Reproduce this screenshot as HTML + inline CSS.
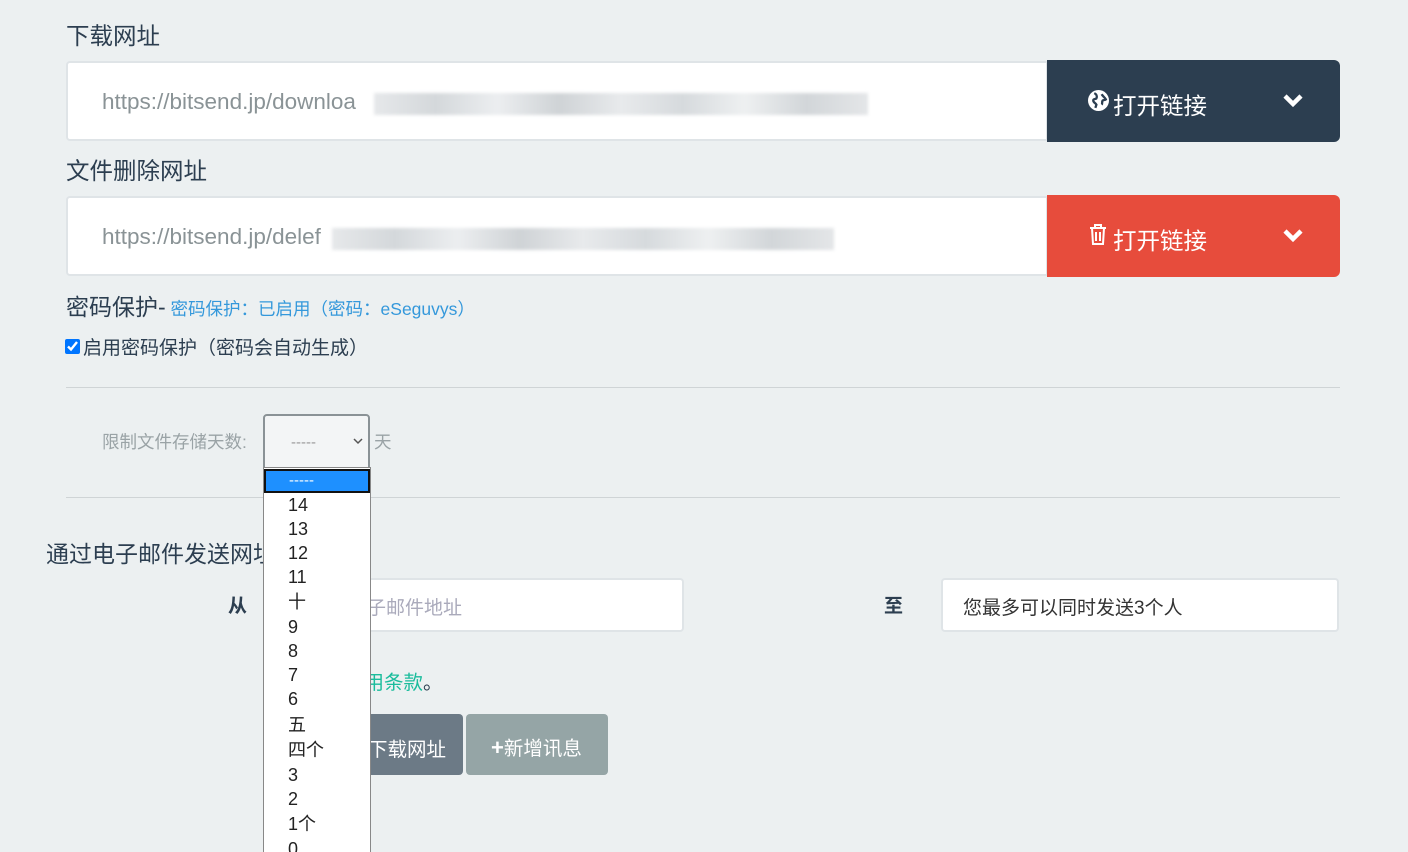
<!DOCTYPE html>
<html><head><meta charset="utf-8"><style>
html,body{margin:0;width:1408px;height:852px;overflow:hidden}
body{background:#ecf0f1;font-family:"Liberation Sans","Noto Sans CJK SC",sans-serif;color:#2c3e50;position:relative}
.a{position:absolute}
.lbl{font-size:23.5px}
.inp{background:#fff;border:2px solid #dfe4e7;box-sizing:border-box;border-radius:4px 0 0 4px}
.url{font-size:22.5px;color:#8a9396;left:34px;top:26px;white-space:nowrap}
.blur{position:absolute;height:22px;background:linear-gradient(90deg,#e6e8ea,#d4d8db,#eceef0,#cfd3d6,#e8eaec,#d6dadd,#eef0f1,#d2d6d9,#e4e6e8);filter:blur(1.5px)}
.btn{color:#fff;border-radius:0 6px 6px 0;box-sizing:border-box}
.btn span{position:absolute;left:66px;top:27px;font-size:23.5px}
.chev{position:absolute;right:36px;top:33px}
.opt{position:absolute;left:24px;font-size:18px;color:#222;height:24px;line-height:24px}
</style></head><body>
<div class="a lbl" style="left:66px;top:17px">下载网址</div>
<div class="a inp" style="left:66px;top:61px;width:982px;height:80px"><div class="a url">https://bitsend.jp/downloa</div><div class="blur" style="left:306px;top:30px;width:494px"></div></div>
<div class="a btn" style="left:1047px;top:60px;width:293px;height:82px;background:#2c3e50">
<svg class="a" style="left:41px;top:30px" width="21" height="21" viewBox="0 0 20 20"><circle cx="10" cy="10" r="10" fill="#fff"/><path d="M6 3c2 1 3 3 2 5-1 1-3 0-3 2s2 2 3 4l-1 3M13 4c1 2 3 3 4 5-1 1-2 0-3 1s0 3-1 4" stroke="#2c3e50" stroke-width="2.2" fill="none"/></svg>
<span>打开链接</span><svg class="chev" width="22" height="16" viewBox="0 0 22 16"><path d="M3 3l8 8 8-8" stroke="#fff" stroke-width="4.5" fill="none"/></svg></div>

<div class="a lbl" style="left:66px;top:152px">文件删除网址</div>
<div class="a inp" style="left:66px;top:196px;width:982px;height:80px"><div class="a url">https://bitsend.jp/delef</div><div class="blur" style="left:264px;top:30px;width:502px"></div></div>
<div class="a btn" style="left:1047px;top:195px;width:293px;height:82px;background:#e74c3c">
<svg class="a" style="left:42px;top:29px" width="18" height="22" viewBox="0 0 18 22"><path d="M1 4h16M6 4V1h6v3M3 4l1 16h10l1-16M7 8v9M11 8v9" stroke="#fff" stroke-width="2" fill="none"/></svg>
<span>打开链接</span><svg class="chev" width="22" height="16" viewBox="0 0 22 16"><path d="M3 3l8 8 8-8" stroke="#fff" stroke-width="4.5" fill="none"/></svg></div>

<div class="a" style="left:66px;top:288px;font-size:23px">密码保护-<span style="font-size:17.5px;color:#3498db"> 密码保护：已启用（密码：eSeguvys）</span></div>
<div class="a" style="left:65px;top:333px;font-size:19px"><input type="checkbox" checked style="margin:0 3px 0 0;width:15px;height:15px;vertical-align:0">启用密码保护（密码会自动生成）</div>
<div class="a" style="left:66px;top:387px;width:1274px;height:1px;background:#cfd4d6"></div>
<div class="a" style="left:102px;top:429px;font-size:17.5px;color:#9aa3a6">限制文件存储天数:</div>
<div class="a" style="left:263px;top:414px;width:107px;height:56px;box-sizing:border-box;border:2px solid #8a9296;border-radius:4px 4px 0 0;background:#f3f5f6"><span class="a" style="left:26px;top:18px;color:#999;font-size:15px">-----</span><svg class="a" style="left:88px;top:22px" width="10" height="8"><path d="M1 1l4 4 4-4" stroke="#555" stroke-width="1.5" fill="none"/></svg></div>
<div class="a" style="left:374px;top:429px;font-size:17.5px;color:#9aa3a6">天</div>
<div class="a" style="left:66px;top:497px;width:1274px;height:1px;background:#cfd4d6"></div>

<div class="a" style="left:46px;top:535px;font-size:23px">通过电子邮件发送网址</div>
<div class="a" style="left:228px;top:591px;font-size:19px;font-weight:bold">从</div>
<div class="a inp" style="left:300px;top:578px;width:384px;height:54px;border-radius:4px"><span class="a" style="left:46px;top:13px;font-size:19px;color:#aab">电子邮件地址</span></div>
<div class="a" style="left:884px;top:591px;font-size:19px;font-weight:bold">至</div>
<div class="a inp" style="left:941px;top:578px;width:398px;height:54px;border-radius:4px"><span class="a" style="left:20px;top:13px;font-size:19px;color:#333">您最多可以同时发送3个人</span></div>
<div class="a" style="left:306px;top:666px;font-size:19.5px;color:#1abc9c">同意使用条款<span style="color:#2c3e50">。</span></div>
<div class="a" style="left:290px;top:714px;width:173px;height:61px;background:#6c7a86;border-radius:4px;color:#fff;font-size:19.5px"><span class="a" style="left:78px;top:19px">下载网址</span></div>
<div class="a" style="left:466px;top:714px;width:142px;height:61px;background:#95a5a6;border-radius:4px;color:#fff;font-size:19.5px"><span class="a" style="left:25px;top:18px"><b style="font-size:22px">+</b>新增讯息</span></div>

<div class="a" style="left:263px;top:467px;width:108px;height:400px;background:#fff;border:1px solid #888;box-sizing:border-box">
<div class="a" style="left:0;top:1px;width:106px;height:24px;background:#1e90ff;box-sizing:border-box;border:2px solid #111"><span class="a" style="left:23px;top:1px;color:#fff;font-size:15px">-----</span></div>
<div class="opt" style="top:25px">14</div><div class="opt" style="top:49px">13</div><div class="opt" style="top:73px">12</div><div class="opt" style="top:97px">11</div><div class="opt" style="top:122px">十</div><div class="opt" style="top:147px">9</div><div class="opt" style="top:171px">8</div><div class="opt" style="top:195px">7</div><div class="opt" style="top:219px">6</div><div class="opt" style="top:245px">五</div><div class="opt" style="top:270px">四个</div><div class="opt" style="top:295px">3</div><div class="opt" style="top:319px">2</div><div class="opt" style="top:344px">1个</div><div class="opt" style="top:369px">0</div>
</div>
</body></html>
